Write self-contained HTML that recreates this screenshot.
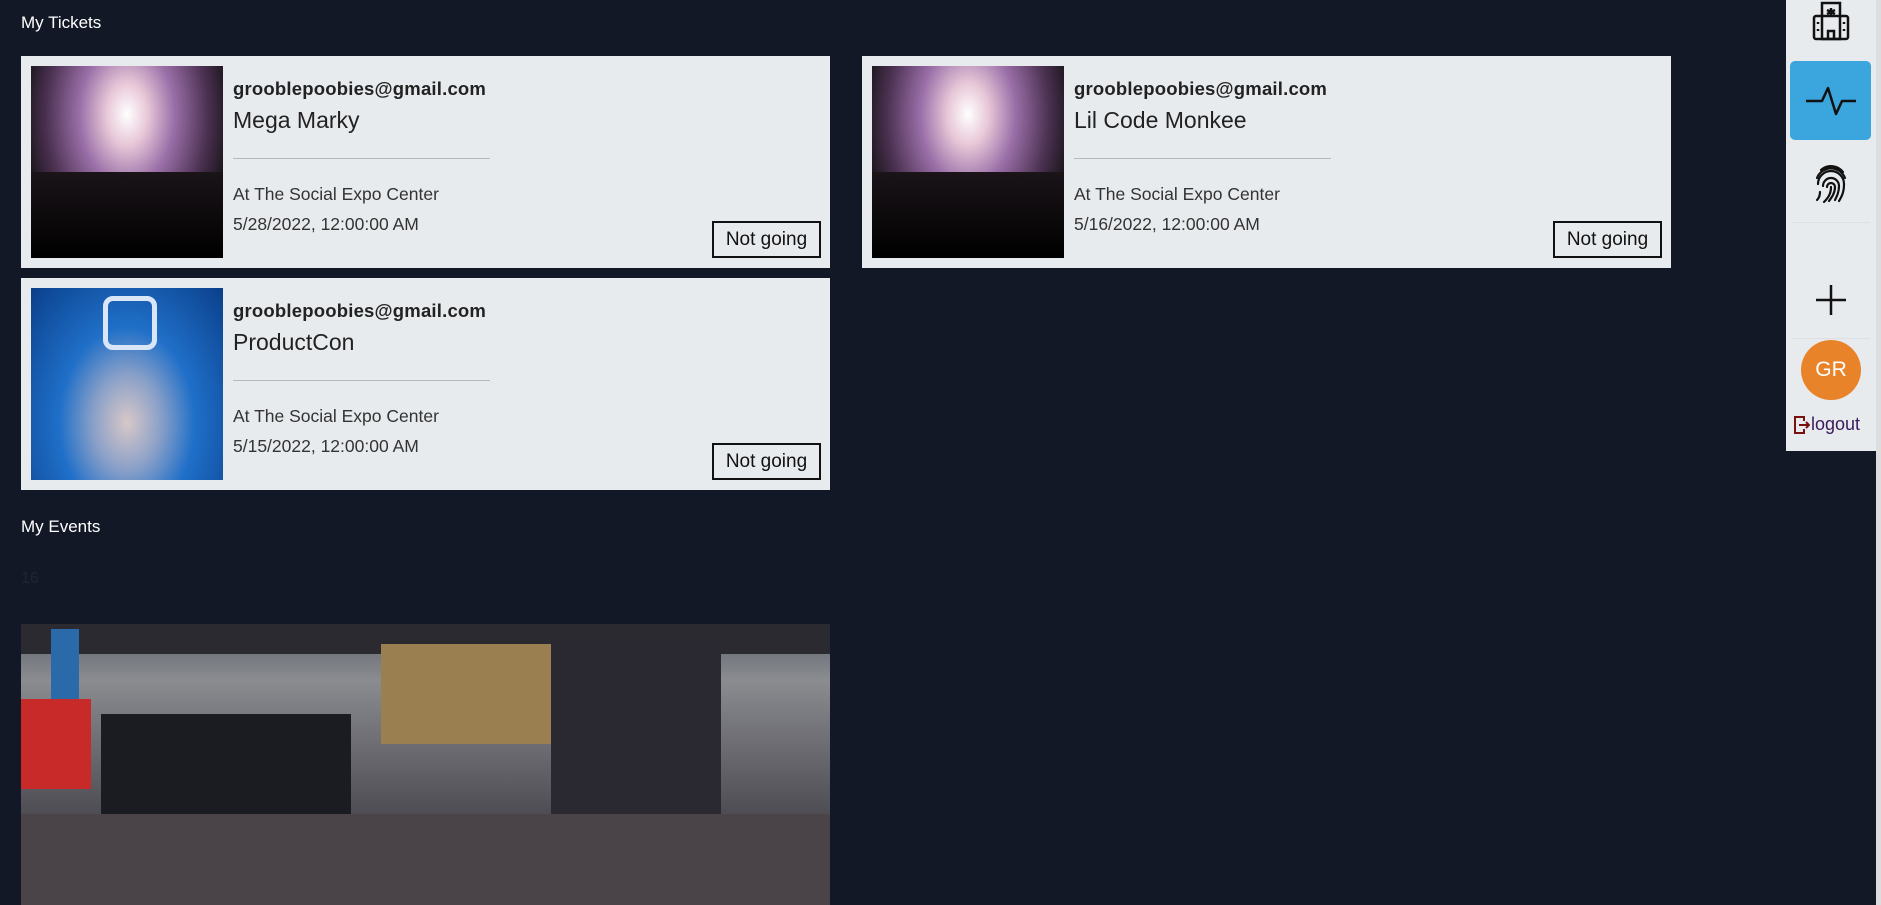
<!DOCTYPE html>
<html><head><style>
*{margin:0;padding:0;box-sizing:border-box}
body{width:1881px;height:905px;background:#121826;font-family:"Liberation Sans",sans-serif;position:relative;overflow:hidden;color:#222}
.h{position:absolute;left:21px;color:#fff;font-size:16px}
.card{position:absolute;width:809px;height:212px;background:#e8ebee}
.img{position:absolute;left:10px;top:10px;width:192px;height:192px}
.c1{background:radial-gradient(ellipse at 50% 25%,#fff 0%,#e8c8d8 15%,#9a6fa8 35%,#4a3050 60%,#111 80%)}
.c1:after{content:"";position:absolute;left:0;right:0;bottom:0;height:45%;background:linear-gradient(#1a1418,#000)}
.c2{background:radial-gradient(ellipse at 50% 70%,#d8c8c8 0%,#8aa0c8 25%,#1f6fc8 50%,#0a3f8a 100%)}
.c2:before{content:"";position:absolute;left:72px;top:8px;width:44px;height:44px;border:5px solid #d8e6f8;border-radius:10px}
.t{position:absolute;left:212px;white-space:nowrap}
.em{top:22px;font-size:18.5px;font-weight:bold;color:#222;letter-spacing:0.2px}
.ti{top:51px;font-size:23px;color:#222}
.dv{position:absolute;left:212px;top:102px;width:257px;height:1px;background:#b8b8b8}
.lo{top:128px;font-size:17.5px;color:#333}
.da{top:158px;font-size:17.5px;color:#333}
.btn{position:absolute;left:691px;top:165px;width:109px;height:37px;border:2px solid #111;font-size:19px;text-align:center;line-height:33px;color:#111}
.side{position:absolute;left:1786px;top:0;width:90px;height:451px;background:#e8ebee}
.strip{position:absolute;left:1876px;top:0;width:5px;height:905px;background:#ddd}
</style></head><body>
<div class="h" style="top:13px;font-size:17px">My Tickets</div>
<div class="card" style="left:21px;top:56px"><div class="img c1"></div><div class="t em">grooblepoobies@gmail.com</div><div class="t ti">Mega Marky</div><div class="dv"></div><div class="t lo">At The Social Expo Center</div><div class="t da">5/28/2022, 12:00:00 AM</div><div class="btn">Not going</div></div>
<div class="card" style="left:862px;top:56px"><div class="img c1"></div><div class="t em">grooblepoobies@gmail.com</div><div class="t ti">Lil Code Monkee</div><div class="dv"></div><div class="t lo">At The Social Expo Center</div><div class="t da">5/16/2022, 12:00:00 AM</div><div class="btn">Not going</div></div>
<div class="card" style="left:21px;top:278px"><div class="img c2"></div><div class="t em">grooblepoobies@gmail.com</div><div class="t ti">ProductCon</div><div class="dv"></div><div class="t lo">At The Social Expo Center</div><div class="t da">5/15/2022, 12:00:00 AM</div><div class="btn">Not going</div></div>
<div class="h" style="top:517px;font-size:17px">My Events</div>
<div class="h" style="top:570px;color:#1e2636">16</div>
<div style="position:absolute;left:21px;top:624px;width:809px;height:281px;background:linear-gradient(180deg,#5a5f6a 0%,#8a8c90 20%,#6a6a70 45%,#4a4a50 70%,#3a3a40 100%)">
<div style="position:absolute;left:0;top:0;width:809px;height:30px;background:#2a2a30"></div>
<div style="position:absolute;left:30px;top:5px;width:28px;height:90px;background:#2a6aa8"></div>
<div style="position:absolute;left:0;top:75px;width:70px;height:90px;background:#c82a2a"></div>
<div style="position:absolute;left:80px;top:90px;width:250px;height:120px;background:#1a1c22"></div>
<div style="position:absolute;left:530px;top:15px;width:170px;height:266px;background:#2a2830"></div>
<div style="position:absolute;left:360px;top:20px;width:170px;height:100px;background:#9a8050"></div>
<div style="position:absolute;left:0;top:190px;width:809px;height:91px;background:#4a4448"></div>
</div>
<div class="side">
<svg style="position:absolute;left:25px;top:0" width="40" height="42" viewBox="0 0 40 42" fill="none" stroke="#111" stroke-width="2.5"><rect x="11" y="3" width="18" height="36"/><rect x="3" y="16" width="34" height="23" rx="2"/><path d="M17 39v-8h6v8M20 8v8M16 10l8 4M24 10l-8 4"/><path d="M7 22v2M7 29v2M33 22v2M33 29v2"/></svg>
<div style="position:absolute;left:4px;top:61px;width:81px;height:79px;background:#3aa6dd;border-radius:5px"></div>
<svg style="position:absolute;left:18px;top:84px" width="54" height="34" viewBox="0 0 54 34" fill="none" stroke="#111" stroke-width="2.5" stroke-linejoin="round"><path d="M2 17h16l6-13 8 26 6-13h14"/></svg>
<svg style="position:absolute;left:27px;top:162px" width="36" height="42" viewBox="0 0 36 42" fill="none" stroke="#111" stroke-width="2.2" stroke-linecap="round"><path d="M8 8a15 15 0 0 1 22 2M4 16a15 15 0 0 1 28 0M5 22a13 13 0 0 1 26 0c0 8-2 12-5 17M10 24a8 8 0 0 1 16 0c0 6-2 10-4 14M14 25a4 4 0 0 1 8 0c0 6-3 10-6 14M18 25c0 7-3 11-7 15M7 30c0 3-1 6-3 8"/></svg>
<div style="position:absolute;left:6px;top:222px;width:78px;height:1px;background:#dcdfe3"></div>
<svg style="position:absolute;left:28px;top:283px" width="34" height="34" viewBox="0 0 34 34" stroke="#111" stroke-width="2.5"><path d="M17 2v30M2 17h30"/></svg>
<div style="position:absolute;left:6px;top:338px;width:78px;height:1px;background:#dcdfe3"></div>
<div style="position:absolute;left:15px;top:340px;width:60px;height:60px;border-radius:50%;background:#e8832a;color:#fff;font-size:21px;text-align:center;line-height:60px">GR</div>
<svg style="position:absolute;left:8px;top:416px" width="16" height="18" viewBox="0 0 16 18" fill="none" stroke="#7a1010" stroke-width="2"><path d="M10 5V1H1v16h9v-4"/><path d="M5 9h10M12 6l3 3-3 3"/></svg>
<div style="position:absolute;left:25px;top:414px;font-size:18px;color:#3a1a5a">logout</div>
</div>
<div class="strip"></div>
</body></html>
